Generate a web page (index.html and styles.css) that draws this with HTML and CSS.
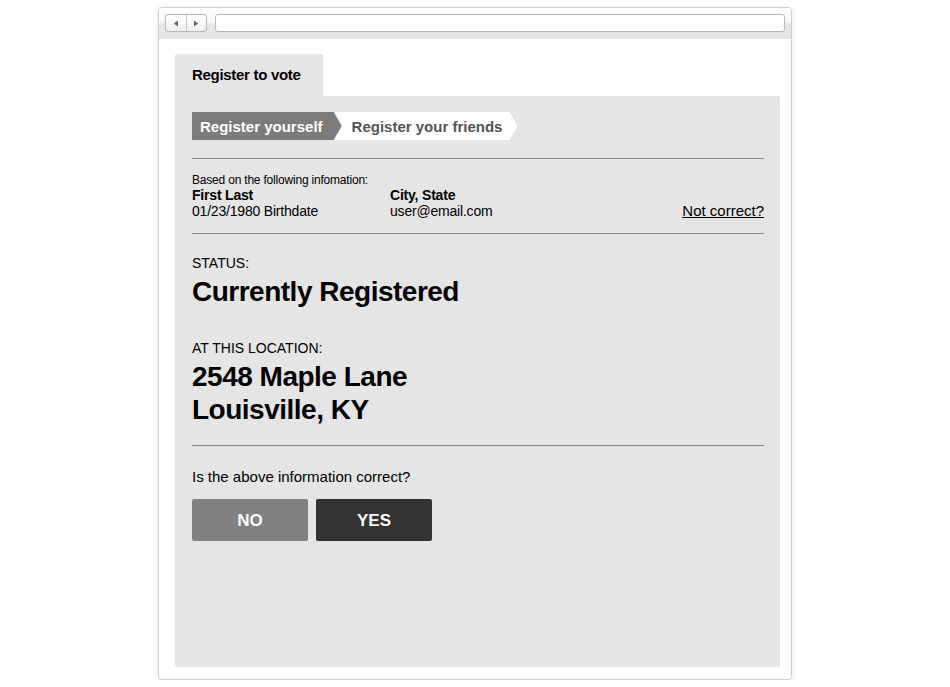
FILE: index.html
```html
<!DOCTYPE html>
<html>
<head>
<meta charset="utf-8">
<link rel="stylesheet" href="styles.css">
</head>
<body>
<div class="window">
  <div class="toolbar">
    <div class="nav">
      <span class="navbtn"><svg width="6" height="7" viewBox="0 0 6 7"><path d="M5 0.5 L0.8 3.5 L5 6.5 Z" fill="#666"/></svg></span>
      <span class="navbtn"><svg width="6" height="7" viewBox="0 0 6 7"><path d="M1 0.5 L5.2 3.5 L1 6.5 Z" fill="#666"/></svg></span>
    </div>
    <div class="address"></div>
  </div>
  <div class="content">
    <div class="tabs"><div class="tab">Register to vote</div></div>
    <div class="panel">
      <div class="steps">
        <div class="step step-active">Register yourself</div>
        <div class="step step-next">Register your friends</div>
      </div>
      <div class="info">
        <div class="info-intro">Based on the following infomation:</div>
        <div class="info-row">
          <div class="info-col">
            <div class="strong">First Last</div>
            <div>01/23/1980 Birthdate</div>
          </div>
          <div class="info-col">
            <div class="strong">City, State</div>
            <div>user@email.com</div>
          </div>
          <a class="not-correct" href="#">Not correct?</a>
        </div>
      </div>
      <div class="result">
        <div class="label">STATUS:</div>
        <div class="big">Currently Registered</div>
        <div class="label label-loc">AT THIS LOCATION:</div>
        <div class="big">2548 Maple Lane<br>Louisville, KY</div>
      </div>
      <div class="confirm">
        <div class="question">Is the above information correct?</div>
        <div class="buttons">
          <button class="btn btn-no">NO</button>
          <button class="btn btn-yes">YES</button>
        </div>
      </div>
    </div>
  </div>
</div>
</body>
</html>
```

FILE: styles.css
```css
html, body {
  margin: 0;
  padding: 0;
  background: #fff;
}
body {
  font-family: "Liberation Sans", Arial, Helvetica, sans-serif;
  color: #000;
  padding-top: 7px;
}
.window {
  margin-left: 158px;
  width: 632px;
  height: 671px;
  border: 1px solid #cfcfcf;
  border-radius: 4px;
  box-shadow: 0 1px 6px rgba(0,0,0,0.10);
  display: flex;
  flex-direction: column;
  overflow: hidden;
  background: #fff;
}
.toolbar {
  height: 31px;
  box-sizing: border-box;
  padding: 6px 6px 0 6px;
  display: flex;
  gap: 8px;
  background: linear-gradient(#fdfdfd 0%, #f8f8f8 45%, #e8e8e8 52%, #e4e4e4 100%);
}
.nav {
  display: flex;
  width: 42px;
  height: 18px;
  box-sizing: border-box;
  border: 1px solid #b8b8b8;
  border-radius: 3px;
  background: linear-gradient(#ffffff, #f0f0f0);
}
.navbtn {
  flex: 1;
  display: flex;
  align-items: center;
  justify-content: center;
}
.navbtn + .navbtn {
  border-left: 1px solid #c8c8c8;
}
.address {
  flex: 1;
  height: 18px;
  box-sizing: border-box;
  border: 1px solid #b8b8b8;
  border-radius: 3px;
  background: #fff;
}
.content {
  flex: 1;
  padding: 15px 11px 12px 16px;
  display: flex;
  flex-direction: column;
}
.tabs {
  display: flex;
}
.tab {
  width: 148px;
  height: 42px;
  box-sizing: border-box;
  padding: 12px 0 0 17px;
  background: #e5e5e5;
  font-weight: bold;
  font-size: 15px;
  letter-spacing: -0.3px;
  border-radius: 2px 2px 0 0;
}
.panel {
  flex: 1;
  background: #e5e5e5;
  padding: 16px 16px 0 17px;
  border-radius: 0 2px 2px 2px;
}
.steps {
  display: flex;
  height: 28px;
  padding-bottom: 18px;
  border-bottom: 1px solid #8a8a8a;
}
.step {
  height: 28px;
  line-height: 29px;
  font-size: 15px;
  font-weight: bold;
  box-sizing: border-box;
}
.step-active {
  background: #7b7b7b;
  color: #fff;
  padding: 0 19px 0 8px;
  clip-path: polygon(0 0, calc(100% - 8px) 0, 100% 50%, calc(100% - 8px) 100%, 0 100%);
}
.step-next {
  background: #fff;
  color: #555;
  margin-left: -7px;
  padding: 0 15px 0 17px;
  clip-path: polygon(0 0, calc(100% - 8px) 0, 100% 50%, calc(100% - 8px) 100%, 0 100%, 8px 50%);
}
.info {
  padding: 14px 0 14px;
  border-bottom: 1px solid #8a8a8a;
  font-size: 14px;
  letter-spacing: -0.2px;
}
.info-intro {
  font-size: 12px;
  line-height: 14px;
}
.info-row {
  display: flex;
  align-items: flex-end;
  line-height: 16px;
}
.info-col {
  width: 198px;
}
.strong {
  font-weight: bold;
}
.not-correct {
  margin-left: auto;
  color: #000;
  font-size: 15px;
  letter-spacing: 0;
  text-decoration: underline;
}
.result {
  padding: 21px 0 19px;
  border-bottom: 1px solid #8a8a8a;
}
.label {
  font-size: 14px;
  line-height: 17px;
}
.label-loc {
  margin-top: 32px;
}
.big {
  font-size: 28px;
  font-weight: bold;
  line-height: 33px;
  margin-top: 3px;
  letter-spacing: -0.5px;
}
.confirm {
  padding-top: 22px;
}
.question {
  font-size: 15px;
  line-height: 18px;
}
.buttons {
  display: flex;
  gap: 8px;
  margin-top: 13px;
}
.btn {
  width: 116px;
  height: 42px;
  border: none;
  border-radius: 2px;
  color: #fff;
  font-family: "Liberation Sans", Arial, sans-serif;
  font-weight: bold;
  font-size: 17px;
  padding: 1px 0 0;
}
.btn-no {
  background: #808080;
}
.btn-yes {
  background: #333333;
}
```
